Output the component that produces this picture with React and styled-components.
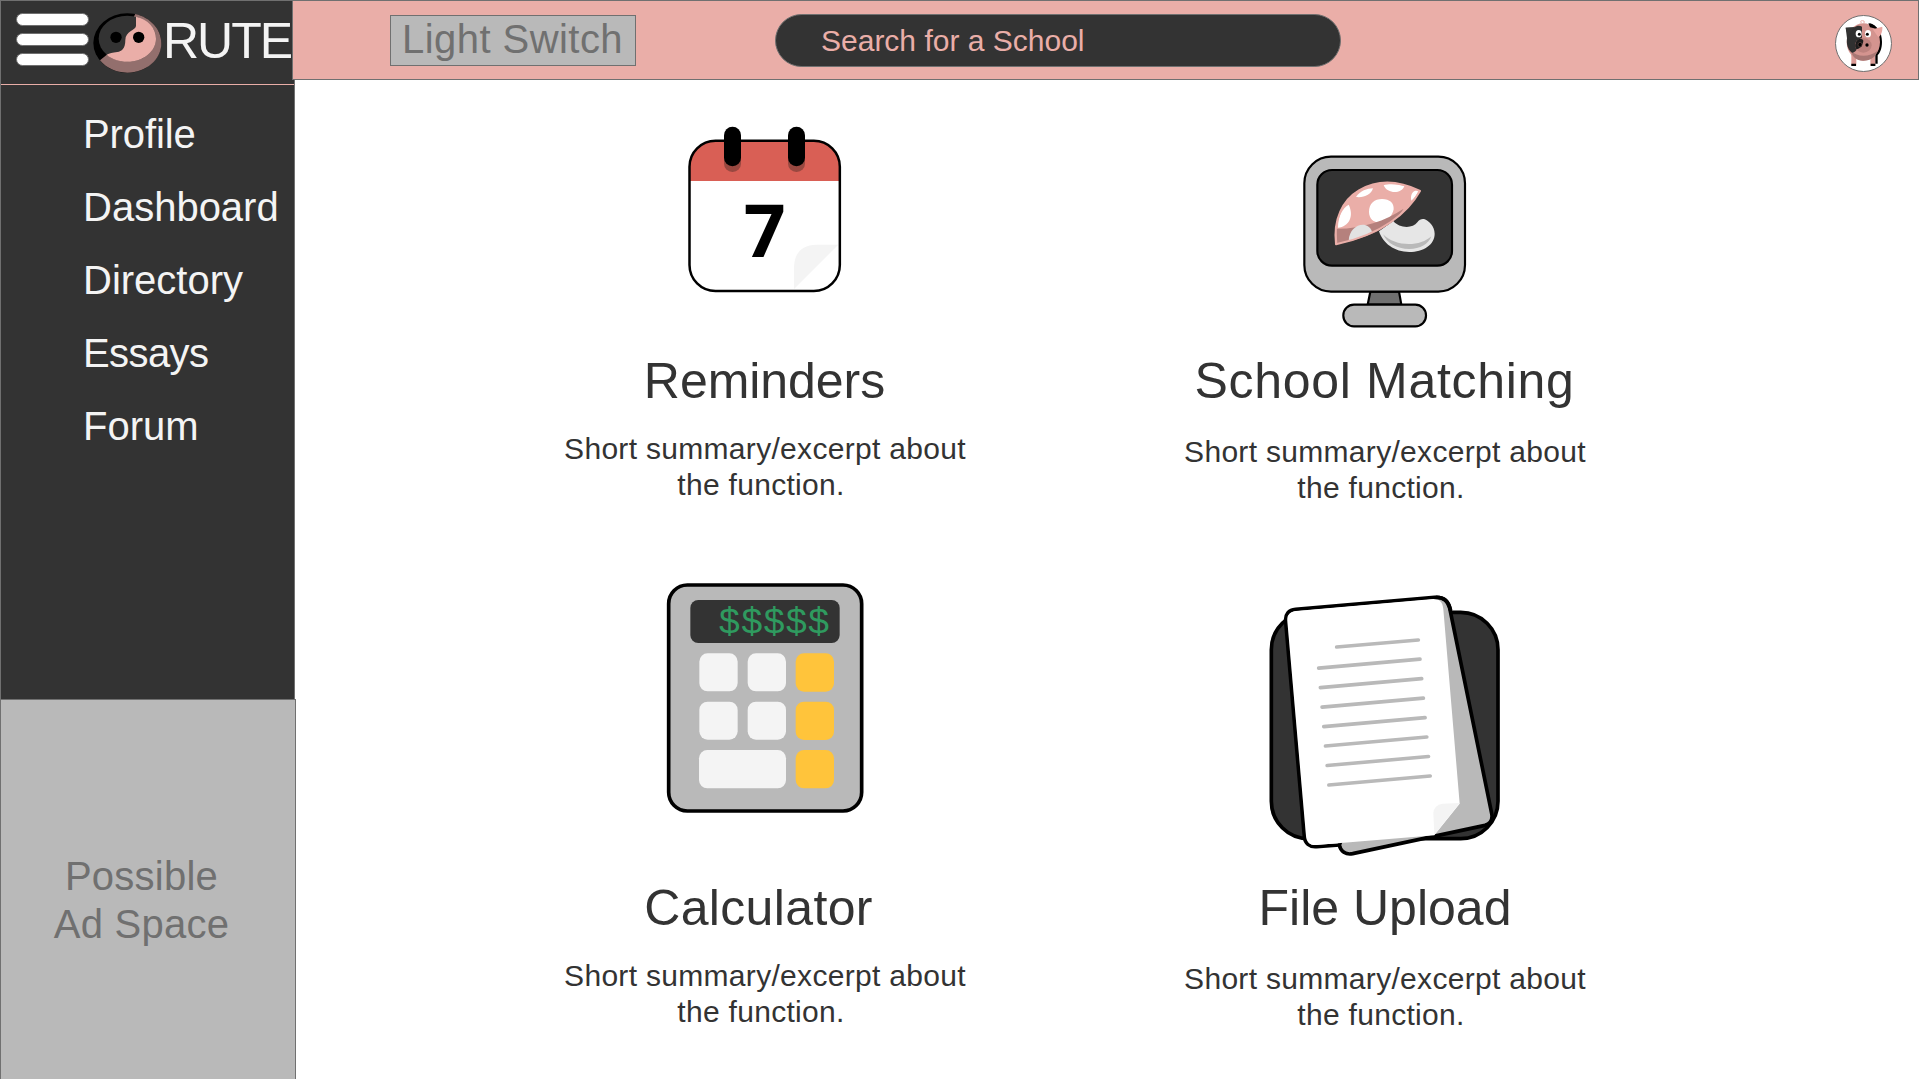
import React from "react";
import styled, { createGlobalStyle } from "styled-components";

const c = {
  pink: "#eaaea8",
  dark: "#333333",
  line: "#707070",
  gray: "#b9b9b9",
  light: "#f4f4f4",
};

const GlobalStyle = createGlobalStyle`
  * { box-sizing: border-box; }
  body {
    margin: 0;
    background: #ffffff;
    font-family: "Liberation Sans", Arial, sans-serif;
    overflow: hidden;
  }
  svg { display: block; flex: none; }
`;

const Page = styled.div`
  width: 1920px;
  height: 1079px;
  display: flex;
  flex-direction: column;
  overflow: hidden;
`;

const TopRow = styled.div`
  display: flex;
  height: 80px;
  flex: none;
`;

const Brand = styled.div`
  width: 292px;
  flex: none;
  display: flex;
  align-items: flex-start;
  padding: 12px 0 0 15px;
  background: ${c.dark};
  border-top: 1px solid ${c.line};
  border-left: 1px solid ${c.line};
`;

const MenuButton = styled.button`
  display: flex;
  flex-direction: column;
  gap: 7px;
  width: 73px;
  flex: none;
  padding: 0;
  border: 0;
  background: none;
`;

const MenuBar = styled.span`
  height: 13px;
  border: 1px solid ${c.line};
  border-radius: 7px;
  background: #ffffff;
`;

const Logo = styled.div`
  margin-left: 4px;
`;

const BrandName = styled.span`
  margin: -1px 0 0 1px;
  font-size: 50px;
  line-height: 58px;
  letter-spacing: -2px;
  color: ${c.light};
`;

const Header = styled.header`
  width: 1627px;
  display: flex;
  align-items: flex-start;
  background: ${c.pink};
  border: 1px solid ${c.line};
`;

const LightSwitch = styled.button`
  width: 246px;
  height: 51px;
  margin: 14px 0 0 97px;
  padding: 0 0 0 11px;
  border: 1px solid ${c.line};
  background: ${c.gray};
  color: ${c.line};
  font: 40px/47px "Liberation Sans", Arial, sans-serif;
  letter-spacing: 0.45px;
  text-align: left;
  white-space: nowrap;
  display: flex;
  align-items: flex-start;
`;

const Search = styled.div`
  width: 566px;
  height: 53px;
  margin: 13px 0 0 139px;
  padding-left: 45px;
  border: 1px solid ${c.line};
  border-radius: 27px;
  background: ${c.dark};
  color: ${c.pink};
  font-size: 30px;
  line-height: 51px;
`;

const Avatar = styled.div`
  margin: 14px 26px 0 auto;
`;

const Body = styled.div`
  flex: 1;
  display: flex;
`;

const Sidebar = styled.aside`
  width: 296px;
  flex: none;
  display: flex;
  flex-direction: column;
`;

const Nav = styled.nav`
  width: 295px;
  height: 619px;
  padding-top: 4px;
  background: ${c.dark};
  border-left: 1px solid ${c.line};
  border-right: 1px solid ${c.line};
`;

const NavList = styled.ul`
  margin: 0;
  padding: 13px 0 0 82px;
  border-top: 1px solid ${c.pink};
  list-style: none;
`;

const NavItem = styled.li`
  height: 73px;
  line-height: 73px;
  font-size: 40px;
  letter-spacing: ${(p) => p.$tracking}px;
  color: ${c.light};
`;

const AdSpace = styled.div`
  flex: 1;
  padding: 152px 13px 0 0;
  border: 1px solid ${c.line};
  border-bottom: 0;
  background: ${c.gray};
  color: ${c.line};
  font-size: 40px;
  line-height: 48px;
  letter-spacing: 0.25px;
  text-align: center;
`;

const Main = styled.main`
  display: grid;
  grid-template-columns: 620px 620px;
  grid-template-rows: 480px 1fr;
  margin-left: 159px;
`;

const Card = styled.section`
  display: flex;
  flex-direction: column;
  align-items: center;
`;

const Art = styled.div`
  height: ${(p) => p.$height}px;
  padding-top: ${(p) => p.$offset}px;
`;

const Title = styled.h2`
  margin: 0;
  padding-right: ${(p) => p.$nudge}px;
  font-size: 50px;
  font-weight: 400;
  line-height: 60px;
  letter-spacing: ${(p) => p.$tracking}px;
  color: ${c.dark};
`;

const Summary = styled.p`
  margin: ${(p) => p.$gap}px 0 0;
  font-size: 30px;
  line-height: 36px;
  letter-spacing: 0.31px;
  text-align: center;
  color: ${c.dark};
`;

const LastLine = styled.span`
  display: block;
  padding-right: 8px;
`;

const LogoMark = () => (
  <svg width="69" height="60" viewBox="279 39 207 180">
    <ellipse cx="382" cy="129" rx="102" ry="89" fill="#000" />
    <path d="M300 181 L350 140 L406 42 C452 53 484 88 484 130 C484 179 439 218 382 218 C348 218 319 204 300 181Z" fill="#936f6d" />
    <ellipse cx="382" cy="116" rx="86" ry="69" fill={c.dark} />
    <path d="M408 50 V78 C407 90 376 94 376 120 C376 147 365 154 352 156 C337 158 329 160 320 164 C336 178 358 185 382 185 C430 185 468 154 468 116 C468 84 444 58 408 50Z" fill={c.pink} />
    <circle cx="348" cy="112" r="17" />
    <circle cx="416" cy="112" r="17" />
  </svg>
);

const PigAvatar = () => (
  <svg width="57" height="57" viewBox="45 45 171 171">
    <circle cx="130.500" cy="130.500" r="84" fill="#fff" stroke={c.line} strokeWidth="3" />
    <path d="M124 69 Q119 61 128 62 Q135 61 132 70" fill="none" stroke={c.pink} strokeWidth="3" />
    <path d="M94 155 h15 v42 h-15Z M151 155 h15 v42 h-15Z" fill="#dc9b96" />
    <path d="M94 191 h14 v7 h-14Z M152 191 h14 v7 h-14Z" fill="#000" />
    <path d="M148 69 C172 76 186 96 186 125 C186 146 180 158 173 166 V191 H166 V160Z" fill="#000" />
    <ellipse cx="130" cy="126" rx="50" ry="56" fill="#d4948f" />
    <path d="M145 70 L162 76 L168 86 L150 82Z" fill="#000" />
    <path d="M93 152 C112 172 148 172 173 152 C165 174 149 182 129 182 C110 182 96 169 93 152Z" fill="#a87774" />
    <path d="M77 83 L103 82 C110 76 120 76 126 80 V112 C124 124 116 129 112 145 C107 157 99 160 94 157 C83 148 79 132 81 115Z" fill="#303030" />
    <path d="M158 88 L187 80 C188 96 182 107 175 112Z" fill="#e9a5a0" />
    <path d="M77 83 L103 82 L84 108Z" fill={c.dark} />
    <ellipse cx="130" cy="136" rx="25" ry="22" fill="#bd827e" />
    <path d="M107 128 C113 113 126 114 130 122 C128 138 119 147 109 147 Q103 140 107 128Z" fill="#1c1c1c" />
    <ellipse cx="116" cy="101" rx="9" ry="11" fill="#fff" />
    <ellipse cx="144" cy="101" rx="9" ry="11" fill="#fff" />
    <circle cx="118" cy="103" r="4.500" />
    <circle cx="142" cy="103" r="4.500" />
    <ellipse cx="120" cy="134" rx="6" ry="7" fill="#000" stroke="#604846" strokeWidth="2" />
    <circle cx="141" cy="135" r="5" />
  </svg>
);

const CalendarIcon = () => (
  <svg width="190" height="200" viewBox="0 0 570 600">
    <rect x="58" y="92" width="451" height="451" rx="78" fill="#fff" />
    <path d="M58 213 V170 A78 78 0 0 1 136 92 H431 A78 78 0 0 1 509 170 V213Z" fill="#d95f55" />
    <rect x="162" y="70" width="51" height="116" rx="25" fill="#994840" />
    <rect x="354" y="70" width="51" height="116" rx="25" fill="#994840" />
    <path d="M372 537 V472 Q374 405 440 404 H505Z" fill={c.light} />
    <rect x="58.500" y="92" width="451" height="451" rx="78" fill="none" stroke="#000" strokeWidth="7.500" />
    <rect x="162" y="50" width="51" height="119" rx="25.500" />
    <rect x="354" y="50" width="51" height="119" rx="25.500" />
    <text x="284" y="440" textAnchor="middle" fontFamily="'Open Sans', 'Noto Sans', sans-serif" fontWeight="700" fontSize="220">7</text>
  </svg>
);

const MonitorIcon = () => (
  <svg width="210" height="200" viewBox="0 0 630 600">
    <g stroke="#000" strokeWidth="6.500">
      <path d="M271 455 H357 L364 494 H263Z" fill={c.line} />
      <rect x="73" y="50" width="482" height="405" rx="80" fill={c.gray} />
      <rect x="112" y="90" width="404" height="287" rx="44" fill={c.dark} />
      <rect x="190" y="494" width="248" height="65" rx="32" fill={c.gray} />
    </g>
    <path d="M297 274 L340 243 C357 265 398 267 412 247 C418 238 425 236 432 237 C447 242 464 259 464 281 C464 314 430 336 388 336 C344 336 308 310 297 274Z" fill="#e6e6e6" />
    <path d="M309 283 C345 321 421 321 454 289 C446 313 420 327 388 327 C349 327 321 309 309 283Z" fill={c.gray} />
    <path d="M168 313 C159 238 188 180 237 151 C294 118 359 123 420 153 C385 215 309 284 168 313Z" fill={c.pink} />
    <path d="M174 263 C174 230 187 205 206 194 C223 228 207 260 174 263Z M228 171 C241 153 261 145 279 145 C274 163 252 174 228 171Z M311 136 C326 131 352 132 373 139 C365 162 322 163 311 136Z M394 182 C390 164 399 149 415 152 Q411 166 394 182Z M267 216 C267 190 284 177 306 177 C330 178 342 188 341 208 C338 225 325 240 310 246 C287 253 267 239 267 216Z" fill="#fff" />
    <path d="M169 266 C243 267 316 243 371 206 C334 263 262 295 172 311Z" fill="#b5817d" />
    <path d="M206 303 C207 254 263 237 276 275 Q244 295 206 303Z" fill="#e2e2e2" />
    <path d="M168 313 C159 238 188 180 237 151 C294 118 359 123 420 153 C385 215 309 284 168 313Z" fill="none" stroke={c.pink} strokeWidth="6" strokeLinejoin="round" />
  </svg>
);

const KEY_ROWS = [250, 395, 540];

const CalculatorIcon = () => (
  <svg width="230" height="260" viewBox="0 0 690 780">
    <rect x="56" y="45" width="579" height="678" rx="56" fill={c.gray} stroke="#000" strokeWidth="11" />
    <rect x="121" y="90" width="448" height="129" rx="24" fill={c.dark} />
    <text x="205" y="190" fontFamily="'Liberation Mono', monospace" fontSize="111.500" fill="#2f9a5f">$$$$$</text>
    {KEY_ROWS.slice(0, 2).map((y) => (
      <g key={y} fill={c.light}>
        <rect x="148" y={y} width="115" height="114" rx="25" />
        <rect x="293" y={y} width="115" height="114" rx="25" />
      </g>
    ))}
    <rect x="147" y="540" width="261" height="115" rx="25" fill={c.light} />
    {KEY_ROWS.map((y) => (
      <rect key={y} x="437" y={y} width="115" height="115" rx="25" fill="#ffc43b" />
    ))}
  </svg>
);

const TEXT_LINES = [0, 1, 2, 3, 4, 5, 6];

const FilesIcon = () => (
  <svg width="270" height="290" viewBox="0 0 810 870">
    <rect x="64" y="97" width="680" height="679" rx="112" fill={c.dark} stroke="#000" strokeWidth="11" />
    <path d="M560 52 C580 52 594 62 599 84 L725 700 C729 718 721 731 705 736 L308 821 C287 825 272 814 268 795Z" fill={c.gray} stroke="#000" strokeWidth="11" strokeLinejoin="round" />
    <path d="M137 88 L554 52 C583 50 597 64 602 92 M268 795 L200 800 C178 802 165 790 163 770 L107 124 C105 103 116 90 137 88" fill="none" stroke="#000" strokeWidth="11" />
    <path d="M138 93 L550 57 C569 57 578 66 580 88 L629 671 L553 766 L200 795 C181 797 169 786 168 768 L112 124 C110 106 119 95 138 93Z" fill="#fff" />
    <path d="M553 764 L550 699 Q552 675 578 671 L629 669Z" fill={c.light} />
    <g stroke={c.gray} strokeWidth="11" strokeLinecap="round">
      <path d="M260 201 L505 180" />
      {TEXT_LINES.map((i) => (
        <path key={i} d={`M${206 + i * 5.1} ${264.500 + i * 58.400} l304 -27`} />
      ))}
    </g>
  </svg>
);

const LINKS = [
  { label: "Profile", tracking: -0.1 },
  { label: "Dashboard", tracking: 0 },
  { label: "Directory", tracking: 0 },
  { label: "Essays", tracking: -0.6 },
  { label: "Forum", tracking: 0 },
];

const CARDS = [
  { title: "Reminders", Icon: CalendarIcon, height: 271, offset: 30, gap: 20, nudge: 1, tracking: -0.05 },
  { title: "School Matching", Icon: MonitorIcon, height: 271, offset: 60, gap: 23, nudge: 1, tracking: 0.68 },
  { title: "Calculator", Icon: CalculatorIcon, height: 318, offset: 10, gap: 20, nudge: 13, tracking: 0.35 },
  { title: "File Upload", Icon: FilesIcon, height: 318, offset: 20, gap: 23, nudge: 0, tracking: 0 },
];

export default function App() {
  return (
    <Page>
      <GlobalStyle />
      <TopRow>
        <Brand>
          <MenuButton aria-label="Menu">
            <MenuBar />
            <MenuBar />
            <MenuBar />
          </MenuButton>
          <Logo><LogoMark /></Logo>
          <BrandName>RUTE</BrandName>
        </Brand>
        <Header>
          <LightSwitch>Light Switch</LightSwitch>
          <Search>Search for a School</Search>
          <Avatar><PigAvatar /></Avatar>
        </Header>
      </TopRow>
      <Body>
        <Sidebar>
          <Nav>
            <NavList>
              {LINKS.map(({ label, tracking }) => (
                <NavItem key={label} $tracking={tracking}>{label}</NavItem>
              ))}
            </NavList>
          </Nav>
          <AdSpace>Possible<br />Ad Space</AdSpace>
        </Sidebar>
        <Main>
          {CARDS.map(({ title, Icon, height, offset, gap, nudge, tracking }) => (
            <Card key={title}>
              <Art $height={height} $offset={offset}><Icon /></Art>
              <Title $nudge={nudge} $tracking={tracking}>{title}</Title>
              <Summary $gap={gap}>
                Short summary/excerpt about
                <LastLine>the function.</LastLine>
              </Summary>
            </Card>
          ))}
        </Main>
      </Body>
    </Page>
  );
}
